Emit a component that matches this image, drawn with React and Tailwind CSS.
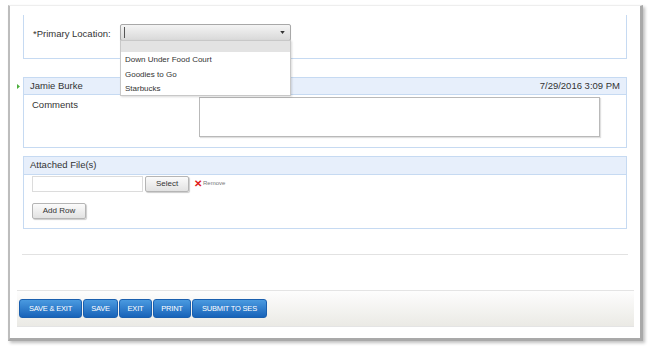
export default function App() {
  const buttons = [
    { label: 'SAVE & EXIT', w: 'w-[63px]' },
    { label: 'SAVE', w: 'w-[35px]' },
    { label: 'EXIT', w: 'w-[33px]' },
    { label: 'PRINT', w: 'w-[38px]' },
    { label: 'SUBMIT TO SES', w: 'w-[75px]' },
  ]

  return (
    <div className="w-[650px] h-[351px] bg-white pt-[5px] pl-[8px] font-['Liberation_Sans',Arial,sans-serif] text-[#333]">
      <div className="w-[635px] h-[336px] border-l-2 border-r-[3px] border-b-[3px] border-t border-l-[#bdbdbd] border-r-[#a9a9a9] border-b-[#a9a9a9] border-t-[#eeeeee] shadow-[2px_2px_3px_rgba(0,0,0,0.25)] flex flex-col">
        {/* primary location */}
        <div className="mt-[9px] ml-[13px] w-[604px] h-[44px] border-l border-r border-b border-[#c6daf2] flex items-start pt-[9px] pl-[9px]">
          <span className="text-[9.5px] mt-[3px] w-[87px]">*Primary Location:</span>
          <div className="relative">
            <div className="w-[171px] h-[17px] border border-[#a8a8a8] rounded-[2px] bg-gradient-to-b from-[#f4f4f4] to-[#d9d9d9] flex items-center justify-between px-[3px] shadow-[0_1px_1px_rgba(0,0,0,0.15)]">
              <div className="w-px h-[11px] bg-[#555]" />
              <svg width="5" height="3" viewBox="0 0 6 4" className="mr-[2px]"><path d="M0 0h6L3 4z" fill="#333" /></svg>
            </div>
            <div className="absolute left-0 top-[16px] w-[171px] bg-white border border-[#c8c8c8] shadow-[1px_1px_2px_rgba(0,0,0,0.15)] z-10 text-[8px]">
              <div className="h-[11px] bg-[#e3e3e3]" />
              <div className="px-[4px] pt-[3px] pb-[1px] flex flex-col gap-[4.5px] leading-[10px]">
                <span>Down Under Food Court</span>
                <span>Goodies to Go</span>
                <span>Starbucks</span>
              </div>
            </div>
          </div>
        </div>

        {/* comments */}
        <div className="relative mt-[18px] ml-[13px] w-[604px] border border-[#c6daf2]">
          <svg width="3" height="5" viewBox="0 0 3 5" className="absolute left-[-7px] top-[6px]"><path d="M0 0l3 2.5L0 5z" fill="#4caf3c" /></svg>
          <div className="h-[17px] bg-[#e7effb] border-b border-[#c6daf2] flex items-center justify-between px-[6px] text-[9.5px]">
            <span>Jamie Burke</span>
            <span>7/29/2016 3:09 PM</span>
          </div>
          <div className="h-[52px] flex items-start pl-[8px] pt-[2px]">
            <span className="text-[9.5px] w-[167px] mt-[1px]">Comments</span>
            <div className="w-[401px] h-[40px] border border-[#b9b9b9] shadow-[1px_1px_1px_rgba(0,0,0,0.12)]" />
          </div>
        </div>

        {/* attached files */}
        <div className="mt-[8px] ml-[13px] w-[604px] border border-[#c6daf2]">
          <div className="h-[18px] bg-[#e7effb] border-b border-[#c6daf2] flex items-center px-[6px] text-[9.5px]">
            <span>Attached File(s)</span>
          </div>
          <div className="h-[53px] pl-[8px] pt-[1px]">
            <div className="flex items-center">
              <div className="w-[111px] h-[16px] border border-[#dcdcdc]" />
              <div className="ml-[2px] w-[44px] h-[16px] border border-[#b5b5b5] rounded-[2px] bg-gradient-to-b from-[#fbfbfb] to-[#e2e2e2] shadow-[1px_1px_1px_rgba(0,0,0,0.2)] text-[8px] flex items-center justify-center">Select</div>
              <span className="ml-[5px] text-[#e0201b] text-[10px] font-bold leading-none">✕</span>
              <span className="ml-[1px] text-[6px] text-[#777] mt-[-2px]">Remove</span>
            </div>
            <div className="mt-[11px] w-[54px] h-[16px] border border-[#b5b5b5] rounded-[2px] bg-gradient-to-b from-[#fbfbfb] to-[#e2e2e2] shadow-[1px_1px_1px_rgba(0,0,0,0.2)] text-[8px] flex items-center justify-center">Add Row</div>
          </div>
        </div>

        <div className="mt-[25px] ml-[12px] w-[606px] h-px bg-[#e2e2e2]" />

        {/* footer */}
        <div className="mt-[35px] ml-[7px] w-[617px] h-[37px] border-t border-b border-[#e4e4e4] bg-gradient-to-b from-[#fdfdfd] to-[#ebeae5] flex items-center pl-[2px] gap-[1px]">
          {buttons.map(b => (
            <div key={b.label} className={`${b.w} h-[19px] rounded-[3px] bg-gradient-to-b from-[#4a9ae0] to-[#1763b9] border border-[#1a5fae] text-white text-[7.5px] flex items-center justify-center tracking-[-0.2px]`}>
              {b.label}
            </div>
          ))}
        </div>
      </div>
    </div>
  )
}
